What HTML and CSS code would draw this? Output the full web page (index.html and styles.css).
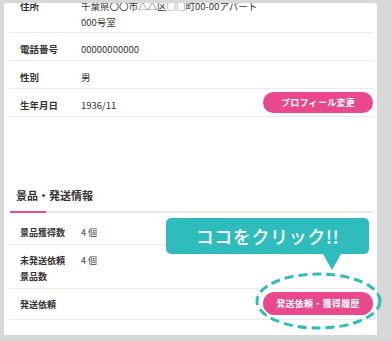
FILE: index.html
```html
<!DOCTYPE html>
<html lang="ja">
<head>
<meta charset="utf-8">
<link rel="stylesheet" href="styles.css">
</head>
<body>
<div class="frame">
  <div class="card">
    <div class="row row-first">
      <div class="label">住所</div>
      <div class="value">千葉県〇〇市△△区□□町00-00アパート<br>000号室</div>
    </div>
    <div class="row">
      <div class="label">電話番号</div>
      <div class="value">00000000000</div>
    </div>
    <div class="row">
      <div class="label">性別</div>
      <div class="value">男</div>
    </div>
    <div class="row row-btn">
      <div class="label">生年月日</div>
      <div class="value">1936/11</div>
      <div class="btn btn-profile">プロフィール変更</div>
    </div>

    <h2 class="section-title">景品・発送情報</h2>
    <div class="tabbar"><div class="tab-active"></div><div class="tab-rest"></div></div>

    <div class="row2 row2-first">
      <div class="label2">景品獲得数</div>
      <div class="value2">4 個</div>
    </div>
    <div class="row2">
      <div class="label2">未発送依頼<br>景品数</div>
      <div class="value2">4 個</div>
    </div>
    <div class="row2 row2-btn">
      <div class="label2">発送依頼</div>
      <div class="btn btn-history">発送依頼・獲得履歴</div>
    </div>
  </div>

  <div class="tooltip">ココをクリック!!</div>
  <svg class="ring" width="129" height="60" viewBox="0 0 129 60">
    <ellipse cx="64.5" cy="30" rx="61.5" ry="27" fill="none" stroke="#2fbcbc" stroke-width="3" stroke-dasharray="9 5"/>
  </svg>
</div>
</body>
</html>
```

FILE: styles.css
```css
html, body {
  margin: 0;
  padding: 0;
}
body {
  width: 391px;
  height: 341px;
  overflow: hidden;
  background: #d8d8d8;
  font-family: "Noto Sans CJK JP", "Noto Sans", sans-serif;
  color: #333;
}
.frame {
  position: relative;
  padding: 3px 14px 6px 4px;
}
.card {
  background: #fff;
  height: 332px;
  overflow: hidden;
  border-radius: 0 4px 0 0;
  padding: 0 4px 0 6px;
  box-sizing: border-box;
}
.row {
  display: flex;
  align-items: flex-start;
  border-bottom: 1px solid #ebebeb;
  padding: 7px 0 2px 10px;
  font-size: 9.5px;
  line-height: 18px;
}
.row-first {
  margin-top: -12px;
  line-height: 16px;
}
.label {
  width: 61px;
  flex: none;
  font-weight: 700;
  color: #333;
}
.value {
  flex: 1;
  color: #333;
}
.btn {
  flex: none;
  width: 110px;
  border-radius: 12px;
  background: #e9488c;
  color: #fff;
  font-weight: 700;
  font-size: 9px;
  text-align: center;
  letter-spacing: 0.3px;
}
.btn-profile {
  height: 21px;
  line-height: 21px;
  margin-top: -4px;
}
.section-title {
  margin: 70px 0 0;
  padding: 0 0 8px 6px;
  font-size: 11px;
  line-height: 16px;
  font-weight: 700;
  color: #333;
}
.tabbar {
  display: flex;
  height: 2px;
}
.tab-active {
  width: 36px;
  background: #e9488c;
}
.tab-rest {
  flex: 1;
  background: #e8e8e8;
}
.row2 {
  display: flex;
  align-items: flex-start;
  border-bottom: 1px solid #ebebeb;
  padding: 8px 0 3px 10px;
  font-size: 9px;
  line-height: 16px;
}
.row2-first {
  padding-top: 12px;
}
.row2-btn {
  padding-bottom: 4px;
}
.label2 {
  width: 61px;
  flex: none;
  font-weight: 700;
  color: #333;
}
.value2 {
  flex: 1;
  color: #444;
}
.row2-btn .label2 {
  flex: 1;
}
.btn-history {
  height: 23px;
  line-height: 23px;
  margin-top: -5px;
}
.tooltip {
  position: absolute;
  left: 166px;
  top: 218px;
  width: 203px;
  height: 36px;
  border-radius: 5px;
  background: #2fbcbc;
  color: #fff;
  font-size: 18px;
  font-weight: 500;
  line-height: 36px;
  text-align: center;
  letter-spacing: 0.6px;
}
.tooltip::after {
  content: "";
  position: absolute;
  left: 157px;
  top: 36px;
  border-style: solid;
  border-width: 16px 9.5px 0 9.5px;
  border-color: #2fbcbc transparent transparent transparent;
}
.ring {
  position: absolute;
  left: 254px;
  top: 271px;
}
```
